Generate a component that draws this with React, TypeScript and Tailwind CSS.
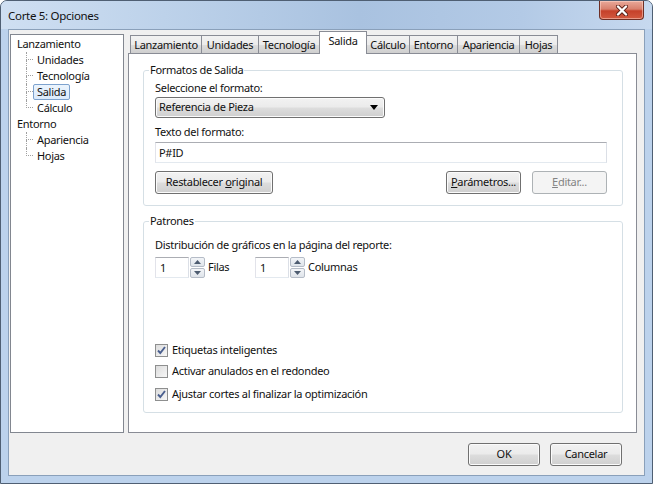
import clsx from "clsx";
import type { ReactNode } from "react";

const font = "font-['Segoe_UI','Noto_Sans',sans-serif]";

function TreeItem({
  label,
  selected,
  child,
  last,
}: {
  label: string;
  selected?: boolean;
  child?: boolean;
  last?: boolean;
}) {
  return (
    <div className="flex h-[16px] items-stretch">
      {child && (
        <div className="w-[20px] flex-none pl-[13px]">
          <div className="flex h-[16px] w-[7px] flex-col">
            <div className="h-[8px] border-b border-l border-dotted border-[#a0a0a0]" />
            <div
              className={clsx(
                "h-[8px]",
                !last && "border-l border-dotted border-[#a0a0a0]"
              )}
            />
          </div>
        </div>
      )}
      <div
        className={clsx(
          "rounded-[2px] border px-[3px] leading-[14px]",
          selected
            ? "border-[#7da2ce] bg-[linear-gradient(180deg,#ebf4fd_0%,#dbeafc_100%)]"
            : "border-transparent"
        )}
      >
        {label}
      </div>
    </div>
  );
}

const tabs: { label: string; w: string; sel?: boolean }[] = [
  { label: "Lanzamiento", w: "w-[72px]" },
  { label: "Unidades", w: "w-[58px]" },
  { label: "Tecnología", w: "w-[62px]" },
  { label: "Salida", w: "w-[48px]", sel: true },
  { label: "Cálculo", w: "w-[44px]" },
  { label: "Entorno", w: "w-[49px]" },
  { label: "Apariencia", w: "w-[63px]" },
  { label: "Hojas", w: "w-[39px]" },
];

function Btn({
  children,
  className,
  disabled,
}: {
  children: ReactNode;
  className?: string;
  disabled?: boolean;
}) {
  return (
    <div
      className={clsx(
        "flex h-[23px] flex-none items-center justify-center rounded-[3px] border",
        disabled
          ? "border-[#adb2b5] bg-[#f4f4f4] text-[#838383]"
          : "border-[#707070] bg-[linear-gradient(180deg,#f2f2f2_0%,#ebebeb_48%,#dddddd_52%,#cfcfcf_100%)] shadow-[inset_0_0_0_1px_#fbfbfb]",
        className
      )}
    >
      {children}
    </div>
  );
}

function Spin({ label }: { label: string }) {
  return (
    <div className="flex h-[21px] items-center">
      <div className="h-[21px] w-[34px] border border-[#abadb3] border-b-[#e3e9ef] border-l-[#e2e3ea] border-r-[#dbdfe6] bg-white pl-[4px] leading-[19px]">
        1
      </div>
      <div className="ml-px flex h-[21px] w-[15px] flex-col gap-px">
        {[0, 1].map((i) => (
          <div
            key={i}
            className="flex flex-1 items-center justify-center rounded-[2px] border border-[#b5bcc7] bg-[linear-gradient(180deg,#f3f5f8_0%,#dfe4ea_100%)]"
          >
            <svg width="7" height="4" viewBox="0 0 7 4">
              <path
                d={i === 0 ? "M0 4 L3.5 0 L7 4 Z" : "M0 0 L3.5 4 L7 0 Z"}
                fill="#4d5c70"
              />
            </svg>
          </div>
        ))}
      </div>
      <span className="ml-[3px]">{label}</span>
    </div>
  );
}

function Check({ checked, label }: { checked?: boolean; label: string }) {
  return (
    <div className="flex h-[16px] items-center">
      <div className="flex h-[13px] w-[13px] items-center justify-center border border-[#8e8f8f] bg-[linear-gradient(135deg,#dcdcdc_0%,#f7f7f7_100%)]">
        {checked && (
          <svg width="11" height="11" viewBox="0 0 11 11">
            <path
              d="M2 5.5 L4.3 8 L9 2"
              stroke="#4a5f8f"
              strokeWidth="1.9"
              fill="none"
            />
          </svg>
        )}
      </div>
      <span className="ml-[4px]">{label}</span>
    </div>
  );
}

export default function App() {
  return (
    <div
      className={clsx(
        "flex h-[484px] w-[653px] flex-col overflow-hidden rounded-t-[7px] border border-[#4f5f73] bg-[#bcd2ec] text-[11px] tracking-[-0.3px] text-[#111]",
        font
      )}
    >
      {/* title bar */}
      <div className="flex h-[28px] flex-none items-start justify-between bg-[linear-gradient(90deg,#cfdff2_0%,#bdd2ea_25%,#a9c2e0_55%,#b3cae6_80%,#c7d9ef_100%)]">
        <div className="pl-[7px] pt-[7px] text-[11.5px] leading-[16px]">
          Corte 5: Opciones
        </div>
        <div className="mr-[8px] flex h-[19px] w-[45px] items-center justify-center rounded-b-[4px] border border-t-0 border-[#6e2f25] bg-[linear-gradient(180deg,#e9a99a_0%,#d8806d_45%,#c5412a_55%,#d2593f_100%)] shadow-[inset_0_0_0_1px_rgba(255,220,210,0.5)]">
          <svg width="14" height="11" viewBox="0 0 14 11">
            <path
              d="M3 1.5 L11 9.5 M11 1.5 L3 9.5"
              stroke="#5a1f16"
              strokeWidth="4"
              strokeLinecap="round"
            />
            <path
              d="M3 1.5 L11 9.5 M11 1.5 L3 9.5"
              stroke="#ffffff"
              strokeWidth="2.4"
              strokeLinecap="round"
            />
          </svg>
        </div>
      </div>

      {/* body */}
      <div className="flex flex-1 flex-col px-[7px] pb-[7px]">
        <div className="flex flex-1 flex-col border border-[#8aa0ba] bg-[#f0f0f0]">
          <div className="flex flex-1 pl-[1px] pr-[7px] pt-[1px]">
            {/* tree */}
            <div className="mt-[3px] w-[114px] flex-none border border-[#828790] bg-white pl-[2px] pt-[1px]">
              <TreeItem label="Lanzamiento" />
              <TreeItem label="Unidades" child />
              <TreeItem label="Tecnología" child />
              <TreeItem label="Salida" child selected />
              <TreeItem label="Cálculo" child last />
              <TreeItem label="Entorno" />
              <TreeItem label="Apariencia" child />
              <TreeItem label="Hojas" child last />
            </div>

            {/* tabs */}
            <div className="ml-[4px] flex flex-1 flex-col">
              <div className="flex h-[22px] items-end pl-[2px]">
                {tabs.map((t, i) => (
                  <div
                    key={t.label}
                    className={clsx(
                      "flex flex-none justify-center border border-b-0 border-[#898c95] leading-[16px]",
                      t.w,
                      i > 0 && "-ml-px",
                      t.sel
                        ? "relative z-10 -mb-px h-[23px] bg-white pt-[1px]"
                        : "h-[18px] bg-[linear-gradient(180deg,#f2f2f2_0%,#ebebeb_50%,#dddddd_51%,#cfcfcf_100%)] pt-[1px]"
                    )}
                  >
                    {t.label}
                  </div>
                ))}
              </div>
              <div className="flex-1 border border-[#898c95] bg-white pl-[14px] pr-[13px] pt-[8px]">
                <fieldset className="rounded-[3px] border border-[#d5dfe5]">
                  <legend className="ml-[5px] px-[1px] leading-[16px]">
                    Formatos de Salida
                  </legend>
                  <div className="flex flex-col pb-[11px] pl-[11px] pr-[15px]">
                    <div className="mt-[2px] leading-[16px]">
                      Seleccione el formato:
                    </div>
                    <div className="mt-[1px] flex h-[21px] w-[230px] items-center justify-between rounded-[3px] border border-[#707070] bg-[linear-gradient(180deg,#f2f2f2_0%,#ebebeb_48%,#dddddd_52%,#cfcfcf_100%)] pl-[3px] pr-[6px] shadow-[inset_0_0_0_1px_#fbfbfb]">
                      <span>Referencia de Pieza</span>
                      <svg width="8" height="5" viewBox="0 0 8 5">
                        <path d="M0 0 L8 0 L4 5 Z" fill="#000" />
                      </svg>
                    </div>
                    <div className="mt-[6px] leading-[16px]">
                      Texto del formato:
                    </div>
                    <div className="mt-[2px] h-[21px] border border-[#abadb3] border-b-[#e3e9ef] border-l-[#e2e3ea] border-r-[#dbdfe6] bg-white pl-[3px] leading-[19px]">
                      P#ID
                    </div>
                    <div className="mt-[8px] flex">
                      <Btn className="w-[118px]">
                        <span>
                          Restablecer <span className="underline">o</span>
                          riginal
                        </span>
                      </Btn>
                      <div className="flex-1" />
                      <Btn className="w-[75px]">
                        <span>
                          <span className="underline">P</span>arámetros...
                        </span>
                      </Btn>
                      <Btn className="ml-[11px] w-[75px]" disabled>
                        <span>
                          <span className="underline">E</span>ditar...
                        </span>
                      </Btn>
                    </div>
                  </div>
                </fieldset>

                <fieldset className="mt-[7px] rounded-[3px] border border-[#d5dfe5]">
                  <legend className="ml-[5px] px-[1px] leading-[16px]">
                    Patrones
                  </legend>
                  <div className="flex flex-col pb-[10px] pl-[11px] pr-[15px]">
                    <div className="mt-[8px] leading-[16px]">
                      Distribución de gráficos en la página del reporte:
                    </div>
                    <div className="mt-[4px] flex">
                      <div className="w-[100px]">
                        <Spin label="Filas" />
                      </div>
                      <Spin label="Columnas" />
                    </div>
                    <div className="mt-[64px]">
                      <Check checked label="Etiquetas inteligentes" />
                    </div>
                    <div className="mt-[5px]">
                      <Check label="Activar anulados en el redondeo" />
                    </div>
                    <div className="mt-[7px]">
                      <Check
                        checked
                        label="Ajustar cortes al finalizar la optimización"
                      />
                    </div>
                  </div>
                </fieldset>
              </div>
            </div>
          </div>

          {/* bottom buttons */}
          <div className="flex flex-none justify-end gap-[10px] pb-[9px] pr-[22px] pt-[10px]">
            <Btn className="w-[72px]">OK</Btn>
            <Btn className="w-[72px]">Cancelar</Btn>
          </div>
        </div>
      </div>
    </div>
  );
}
